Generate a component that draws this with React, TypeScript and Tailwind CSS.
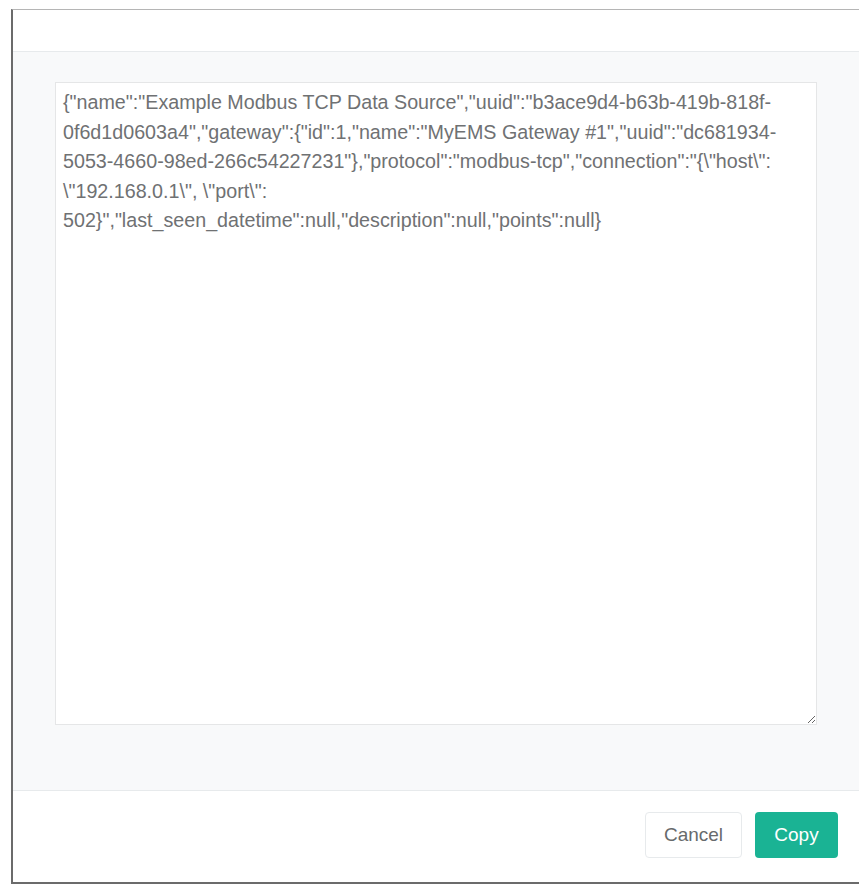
import { useState } from 'react'

const payload =
  '{"name":"Example Modbus TCP Data Source","uuid":"b3ace9d4-b63b-419b-818f-0f6d1d0603a4","gateway":{"id":1,"name":"MyEMS Gateway #1","uuid":"dc681934-5053-4660-98ed-266c54227231"},"protocol":"modbus-tcp","connection":"{\\"host\\": \\"192.168.0.1\\", \\"port\\": 502}","last_seen_datetime":null,"description":null,"points":null}'

export default function App() {
  const [text, setText] = useState(payload)

  return (
    <div className="min-h-[884px] w-[859px] overflow-hidden bg-white pl-[11px] pt-[9px] font-['Liberation_Sans',Arial,sans-serif]">
      <div className="flex h-[875px] w-[848px] flex-col border-l-2 border-t border-b-2 border-l-[#6b6b6b] border-t-[#b5b5b5] border-b-[#6b6b6b] bg-white">
        <div className="h-[42px] shrink-0 border-b border-[#e7eaec]" />

        <div className="flex flex-1 flex-col bg-[#f8f9fa] px-[42px] pt-[30px] pb-[65px]">
          <textarea
            value={text}
            onChange={(e) => setText(e.target.value)}
            className="w-[762px] flex-1 resize-y border border-[#e5e6e7] bg-white px-[7px] pt-[5px] pb-[8px] text-[19.7px] leading-[29.5px] text-[#6f7173] outline-none"
          />
        </div>

        <div className="flex h-[92px] shrink-0 items-start justify-end gap-[13px] border-t border-[#e7eaec] pr-[21px] pt-[21px]">
          <button className="h-[46px] w-[97px] rounded-[4px] border border-[#e7eaec] bg-white text-[19px] text-[#676a6c]">
            Cancel
          </button>
          <button className="h-[46px] w-[83px] rounded-[4px] bg-[#1ab394] text-[19px] text-white">
            Copy
          </button>
        </div>
      </div>
    </div>
  )
}
